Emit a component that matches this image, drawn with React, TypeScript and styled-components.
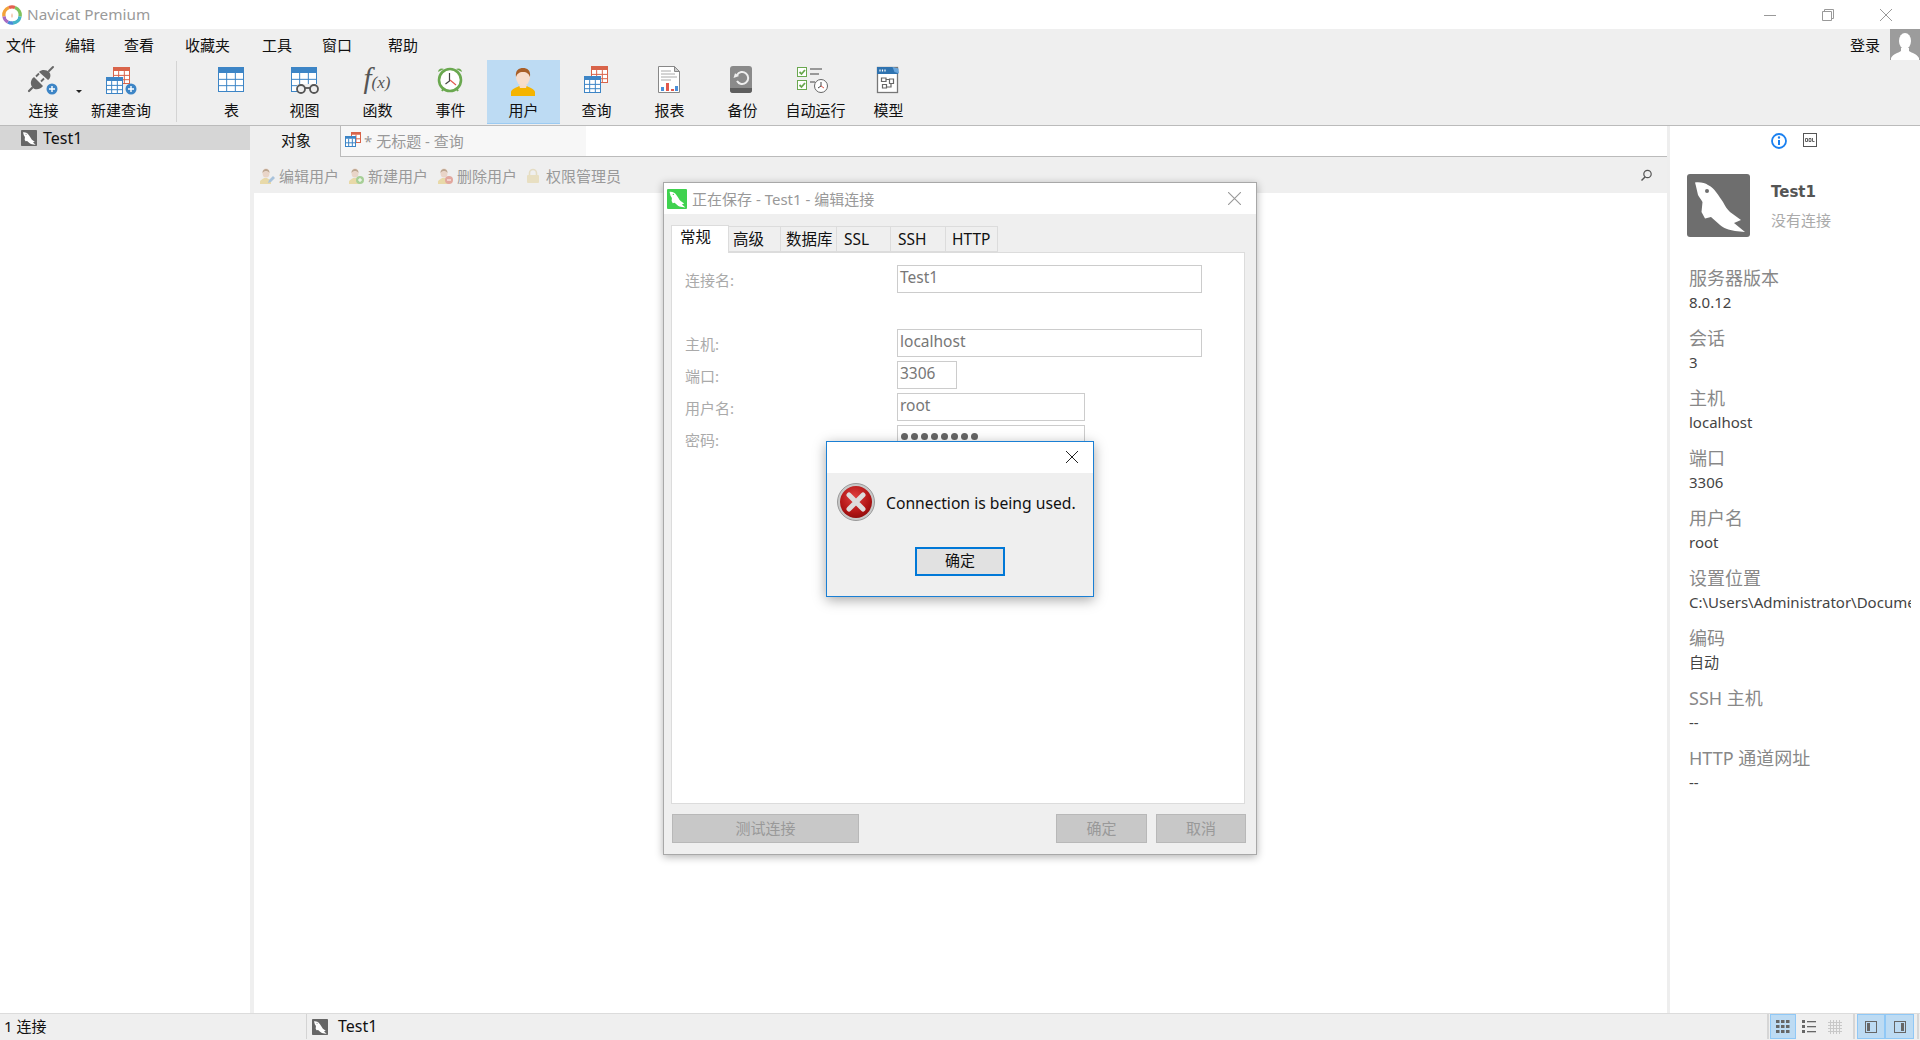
import React from "react"
import styled, {createGlobalStyle} from "styled-components"

const GlobalStyle = createGlobalStyle`
  html, body {
    margin: 0;
    width: 1920px;
    height: 1040px;
    overflow: hidden;
    background: #fff;
    font-family: "Noto Sans", "Noto Sans CJK SC", sans-serif;
    font-size: 15px;
    color: #111;
  }
  * { box-sizing: border-box; }
  svg { display: block; }
`

const Page = styled.div`
  position: relative;
  width: 1920px;
  height: 1040px;
  display: flex;
  flex-direction: column;
  overflow: hidden;
`

const TitleBar = styled.div`
  height: 29px;
  flex: none;
  display: flex;
  align-items: center;
  padding-left: 2px;
  background: #fff;
`

const AppName = styled.span`
  margin-left: 5px;
  margin-top: -2px;
  font-size: 15.3px;
  line-height: 20px;
  color: #9a9a9a;
`

const WinControls = styled.div`
  margin-left: auto;
  display: flex;
  padding-right: 28px;
  gap: 46px;
`

const MenuBar = styled.div`
  height: 31px;
  flex: none;
  display: flex;
  align-items: center;
  background: #efefef;
  padding-left: 6px;
`

const MenuItem = styled.span<{$gap: number}>`
  margin-right: ${(p) => p.$gap}px;
  font-size: 15px;
  line-height: 20px;
`

const Login = styled.span`
  margin-left: auto;
  margin-right: 10px;
  font-size: 15px;
  line-height: 20px;
`

const Avatar = styled.div`
  width: 30px;
  height: 31px;
  background: #9c9c9c;
`

const Toolbar = styled.div`
  height: 66px;
  flex: none;
  display: flex;
  background: #efefef;
  padding-left: 7px;
  border-bottom: 1px solid #bbb;
`

const ToolButton = styled.div<{$active?: boolean; $width?: number; $left?: number}>`
  position: relative;
  width: ${(p) => p.$width ?? 73}px;
  height: 64px;
  margin-left: ${(p) => p.$left ?? 0}px;
  padding-top: 4px;
  display: flex;
  flex-direction: column;
  align-items: center;
  background: ${(p) => (p.$active ? "#bddbf3" : "transparent")};
  border-bottom: 1px solid ${(p) => (p.$active ? "#9ccbf2" : "transparent")};
`

const ToolIcon = styled.div`
  width: 32px;
  height: 32px;
  margin-left: -1px;
`

const ToolLabel = styled.span`
  margin-top: 4px;
  font-size: 15px;
  line-height: 20px;
  white-space: nowrap;
`

const Caret = styled.i`
  position: absolute;
  right: -2px;
  top: 30px;
  border-left: 3px solid transparent;
  border-right: 3px solid transparent;
  border-top: 3px solid #222;
`

const ToolSep = styled.div`
  width: 1px;
  height: 61px;
  margin: 1px 18px 0 20px;
  background: #d4d4d4;
`

const FxText = styled.div`
  width: 32px;
  height: 32px;
  padding-top: 1px;
  text-align: center;
  font-family: "Liberation Serif", serif;
  font-style: italic;
  color: #555;
  white-space: nowrap;
  line-height: 26px;
  font-size: 17px;
  & b {
    font-weight: 400;
    font-size: 29px;
  }
`

const Body = styled.div`
  flex: 1;
  min-height: 0;
  display: flex;
`

const Sidebar = styled.div`
  width: 250px;
  flex: none;
  background: #fff;
`

const TreeRow = styled.div`
  height: 24px;
  display: flex;
  align-items: center;
  gap: 6px;
  padding-left: 21px;
  background: #d6d6d6;
  font-size: 16px;
`

const Main = styled.div`
  flex: 1;
  min-width: 0;
  display: flex;
  flex-direction: column;
`

const TabRow = styled.div`
  height: 31px;
  flex: none;
  display: flex;
  border-bottom: 1px solid #bbb;
  background: #fff;
`

const ObjectTab = styled.div`
  width: 90px;
  height: 31px;
  padding-left: 2px;
  background: #efefef;
  text-align: center;
  font-size: 15px;
  line-height: 29px;
`

const QueryTab = styled.div`
  width: 246px;
  display: flex;
  align-items: center;
  gap: 3px;
  padding: 0 0 2px 4px;
  background: #f7f7f7;
  border-left: 1px solid #bbb;
  color: #999;
  font-size: 15px;
`

const ObjectBar = styled.div`
  height: 36px;
  flex: none;
  display: flex;
  align-items: center;
  padding-left: 9px;
  background: #efefef;
`

const ObjectAction = styled.div<{$gap?: number}>`
  display: flex;
  align-items: center;
  gap: ${(p) => p.$gap ?? 4}px;
  margin-right: 9px;
  padding-top: 1px;
  color: #999;
  font-size: 15px;
`

const SearchSlot = styled.div`
  margin-left: auto;
  margin-right: 14px;
`

const ContentRow = styled.div`
  flex: 1;
  min-height: 0;
  border-left: 4px solid #efefef;
  background: #fff;
`

const Inspector = styled.div`
  width: 253px;
  flex: none;
  border-left: 3px solid #eee;
  background: #fff;
  overflow: hidden;
`

const InspectorTabs = styled.div`
  height: 29px;
  padding: 7px 0 0 101px;
  display: flex;
  gap: 16px;
`

const InspectorHead = styled.div`
  display: flex;
  margin: 19px 0 0 17px;
  gap: 21px;
`

const HeadName = styled.div`
  margin-top: 7px;
  font-family: "DejaVu Sans", sans-serif;
  font-weight: 700;
  font-size: 15px;
  line-height: 22px;
  color: #555;
`

const HeadSub = styled.div`
  margin-top: 6px;
  font-size: 15px;
  line-height: 22px;
  color: #aaa;
`

const InfoList = styled.div`
  margin: 28px 0 0 19px;
  width: 222px;
`

const InfoGroup = styled.div`
  margin-bottom: 12px;
  white-space: nowrap;
  overflow: hidden;
`

const InfoLabel = styled.div`
  font-size: 18px;
  line-height: 26px;
  color: #888;
`

const InfoValue = styled.div`
  font-size: 15px;
  line-height: 22px;
  color: #444;
`

const StatusBar = styled.div`
  height: 27px;
  flex: none;
  display: flex;
  background: #efefef;
  border-top: 1px solid #dcdcdc;
  font-size: 15px;
  line-height: 25px;
`

const StatusCount = styled.div`
  width: 306px;
  padding-left: 4px;
`

const StatusConn = styled.div`
  display: flex;
  align-items: center;
  gap: 10px;
  padding-left: 5px;
  height: 25px;
  border-left: 1px solid #d4d4d4;
  font-size: 16px;
`

const StatusTools = styled.div`
  margin-left: auto;
  display: flex;
  height: 25px;
`

const StatusSep = styled.div<{$left: number; $right: number}>`
  width: 2px;
  height: 25px;
  margin: 0 ${(p) => p.$right}px 0 ${(p) => p.$left}px;
  background: #d6d6d6;
`

const StatusBtn = styled.div<{$active?: boolean; $width: number}>`
  width: ${(p) => p.$width}px;
  height: 25px;
  display: flex;
  align-items: center;
  justify-content: center;
  background: ${(p) => (p.$active ? "#bddbf3" : "transparent")};
  border: 1px solid ${(p) => (p.$active ? "#90c8f6" : "transparent")};
`

const Dialog = styled.div`
  position: absolute;
  left: 663px;
  top: 182px;
  width: 594px;
  height: 673px;
  display: flex;
  flex-direction: column;
  background: #efefef;
  border: 1px solid #a8a8a8;
  box-shadow: 0 2px 8px rgba(0, 0, 0, 0.3);
`

const DialogTitle = styled.div`
  height: 31px;
  flex: none;
  display: flex;
  align-items: center;
  gap: 5px;
  padding: 0 15px 0 3px;
  background: #fff;
  color: #999;
  font-size: 15px;
  line-height: 18px;
`

const CloseSlot = styled.div`
  margin-left: auto;
`

const DialogTabs = styled.div`
  height: 28px;
  margin: 10px 0 0 7px;
  flex: none;
  display: flex;
  align-items: flex-end;
`

const DialogTab = styled.div<{$active?: boolean; $width: number; $pad: number}>`
  position: relative;
  z-index: ${(p) => (p.$active ? 1 : 0)};
  width: ${(p) => p.$width}px;
  height: ${(p) => (p.$active ? 28 : 26)}px;
  margin-bottom: ${(p) => (p.$active ? -1 : 0)}px;
  padding-left: ${(p) => p.$pad}px;
  background: ${(p) => (p.$active ? "#fff" : "#efefef")};
  border: 1px solid #dcdcdc;
  border-bottom: ${(p) => (p.$active ? "none" : "1px solid #dcdcdc")};
  border-left: ${(p) => (p.$active ? "1px solid #dcdcdc" : "none")};
  font-size: 15.5px;
  line-height: ${(p) => (p.$active ? 22 : 24)}px;
  white-space: nowrap;
`

const DialogPanel = styled.div`
  height: 552px;
  margin: 0 11px 0 7px;
  flex: none;
  padding-top: 12px;
  background: #fff;
  border: 1px solid #dcdcdc;
`

const FormRow = styled.div<{$gap?: number}>`
  height: 28px;
  margin-bottom: ${(p) => p.$gap ?? 4}px;
  padding-left: 13px;
  display: flex;
  align-items: center;
`

const FormLabel = styled.label`
  width: 212px;
  color: #aaa;
  font-size: 15px;
  line-height: 20px;
  padding-top: 2px;
`

const FormField = styled.div<{$width: number}>`
  width: ${(p) => p.$width}px;
  height: 28px;
  padding-left: 2px;
  background: #fff;
  border: 1px solid #ccc;
  color: #777;
  font-size: 15.5px;
  line-height: 23px;
  white-space: nowrap;
`

const Dots = styled.div`
  display: flex;
  gap: 3px;
  padding: 7px 0 0 1px;
  & i {
    width: 7px;
    height: 7px;
    border-radius: 50%;
    background: #666;
  }
`

const DialogFooter = styled.div`
  margin: 10px 10px 0 8px;
  display: flex;
  gap: 9px;
`

const GreyButton = styled.div<{$width: number; $push?: boolean}>`
  width: ${(p) => p.$width}px;
  height: 29px;
  margin-left: ${(p) => (p.$push ? "auto" : "0")};
  background: #c8c8c8;
  border: 1px solid #b8b8b8;
  color: #999;
  text-align: center;
  font-size: 15px;
  line-height: 26px;
`

const Alert = styled.div`
  position: absolute;
  left: 826px;
  top: 441px;
  width: 268px;
  height: 156px;
  display: flex;
  flex-direction: column;
  background: #efefef;
  border: 1px solid #1a7fd4;
  box-shadow: 0 3px 12px rgba(0, 0, 0, 0.35);
`

const AlertTitle = styled.div`
  height: 31px;
  flex: none;
  display: flex;
  justify-content: flex-end;
  align-items: center;
  padding: 0 15px 2px 0;
  background: #fff;
`

const AlertBody = styled.div`
  display: flex;
  align-items: center;
  gap: 11px;
  margin: 9px 0 0 10px;
  height: 40px;
`

const AlertText = styled.span`
  padding-top: 2px;
  font-size: 15.7px;
  line-height: 20px;
  white-space: nowrap;
  color: #111;
`

const AlertButton = styled.div`
  width: 90px;
  height: 29px;
  margin: 25px 0 0 88px;
  background: #e1e1e1;
  border: 2px solid #0078d7;
  text-align: center;
  font-size: 15px;
  line-height: 23px;
`

/* ---- drawings ---- */

const Grid = ({x, y, w, h, c, cols = 3, rows = 3}: {x: number; y: number; w: number; h: number; c: string; cols?: number; rows?: number}) => {
  const head = h * 0.24
  const lines = []
  for (let i = 1; i < cols; i++) {
    const lx = x + (w * i) / cols
    lines.push(<line key={"c" + i} x1={lx} x2={lx} y1={y + head} y2={y + h} stroke={c} strokeWidth="1" />)
  }
  for (let i = 1; i < rows; i++) {
    const ly = y + head + ((h - head) * i) / rows
    lines.push(<line key={"r" + i} x1={x} x2={x + w} y1={ly} y2={ly} stroke={c} strokeWidth="1" />)
  }
  return (
    <g>
      <rect x={x + 0.5} y={y + 0.5} width={w - 1} height={h - 1} fill="#fff" stroke={c} />
      <path d={`M${x} ${y + 2}a2 2 0 0 1 2-2h${w - 4}a2 2 0 0 1 2 2v${head - 2}h-${w}z`} fill={c} />
      {lines}
    </g>
  )
}

const PlusBadge = ({cx, cy}: {cx: number; cy: number}) => (
  <g>
    <circle cx={cx} cy={cy} r="5.5" fill="#3d85c6" />
    <path d={`M${cx - 3} ${cy}h6M${cx} ${cy - 3}v6`} stroke="#fff" strokeWidth="1.4" />
  </g>
)

const Svg32 = ({children}: {children: React.ReactNode}) => (
  <svg width="32" height="32" viewBox="0 0 32 32" overflow="visible">
    {children}
  </svg>
)

const ConnectIcon = () => (
  <Svg32>
    <g transform="translate(1 0)">
      <path d="M11 8L20 16C23 14 23 10 21 8C19 6 14 5 11 8Z" fill="#666" />
      <path d="M21 7L25 3" stroke="#666" strokeWidth="2" strokeLinecap="round" />
      <path d="M6 13L15 22C12 26 7 26 5 24C2 21 2 16 6 13Z" fill="#666" />
      <path d="M8 12.500L11 9.500M13 17.500L16 14.500" stroke="#666" strokeWidth="1.800" />
      <path d="M4 24L1 27" stroke="#666" strokeWidth="2.200" strokeLinecap="round" />
    </g>
    <PlusBadge cx={25} cy={25} />
  </Svg32>
)

const NewQueryIcon = () => (
  <Svg32>
    <Grid x={8} y={3} w={17} h={17} c="#d9644a" />
    <Grid x={1} y={13} w={17} h={17} c="#3d85c6" />
    <PlusBadge cx={26} cy={25} />
  </Svg32>
)

const TableIcon = () => (
  <Svg32>
    <Grid x={3} y={3} w={26} h={25} c="#3d85c6" />
  </Svg32>
)

const ViewIcon = () => (
  <Svg32>
    <Grid x={3} y={3} w={26} h={25} c="#3d85c6" />
    <rect x="9" y="20" width="23" height="10" fill="#efefef" />
    <circle cx="13" cy="25" r="4" fill="#efefef" stroke="#555" strokeWidth="1.8" />
    <circle cx="26" cy="25" r="4" fill="#efefef" stroke="#555" strokeWidth="1.8" />
    <path d="M17 24h5" stroke="#555" strokeWidth="1.8" />
  </Svg32>
)

const ClockIcon = () => (
  <Svg32>
    <path d="M4 8a4 4 0 0 1 6-3zM28 8a4 4 0 0 0-6-3z" fill="#6aa84f" />
    <circle cx="16" cy="16" r="11" fill="#fff" stroke="#6aa84f" strokeWidth="2.6" />
    <path d="M8 27l2-3M24 27l-2-3" stroke="#6aa84f" strokeWidth="2" />
    <path d="M15.5 9v8l-4 3" stroke="#444" strokeWidth="1.2" fill="none" />
    <path d="M16 16l6 5" stroke="#e2574c" strokeWidth="1.1" />
  </Svg32>
)

const UserIcon = () => (
  <Svg32>
    <path d="M4 32v-4c0-3 7-5 8-6h8c1 1 8 3 8 6v4z" fill="#f5b400" />
    <path d="M12 21h8l-1 3h-6z" fill="#f6dcc8" />
    <ellipse cx="16" cy="13" rx="7" ry="9" fill="#f7ddcb" />
    <path d="M9 13c-1-7 3-9 7-9s8 2 7 9c-1-3-3-5-7-5s-6 2-7 5z" fill="#a85f28" />
  </Svg32>
)

const QueryIcon = () => (
  <Svg32>
    <Grid x={11} y={2} w={17} h={17} c="#d9644a" />
    <Grid x={4} y={12} w={17} h={17} c="#3d85c6" />
  </Svg32>
)

const ReportIcon = () => (
  <Svg32>
    <path d="M5.5 2.5h16l5 5v21h-21z" fill="#fff" stroke="#888" />
    <path d="M21.5 2.5v5h5z" fill="#ccc" stroke="#888" />
    <path d="M8 7h10M8 10h14M8 13h16M8 16h10" stroke="#aaa" strokeWidth="1" />
    <rect x="8" y="23" width="3" height="4" fill="#4a90d9" />
    <rect x="13" y="19" width="3" height="8" fill="#e2574c" />
    <rect x="18" y="25" width="3" height="2" fill="#e2574c" />
    <rect x="22" y="22" width="3" height="5" fill="#4a90d9" />
  </Svg32>
)

const BackupIcon = () => (
  <Svg32>
    <rect x="4" y="2" width="22" height="27" rx="3" fill="#8a8a8a" />
    <path d="M4 24h22v2a3 3 0 0 1-3 3H7a3 3 0 0 1-3-3z" fill="#5e5e5e" />
    <path d="M11 11a6 6 0 1 1 0 6" fill="none" stroke="#eee" strokeWidth="2" />
    <path d="M7 13h6l-3-4z" fill="#eee" transform="rotate(-20 10 12)" />
  </Svg32>
)

const AutoRunIcon = () => (
  <Svg32>
    <g transform="translate(-7 0)">
      <rect x="5.5" y="3.5" width="9" height="9" fill="#fff" stroke="#6aa84f" />
      <path d="M7.5 8l2 2 3.5-4" fill="none" stroke="#6aa84f" strokeWidth="1.8" />
      <rect x="5.5" y="16.5" width="9" height="9" fill="#fff" stroke="#6aa84f" />
      <path d="M7.5 21l2 2 3.5-4" fill="none" stroke="#6aa84f" strokeWidth="1.8" />
      <path d="M18 5h12M18 10h9M18 18h5" stroke="#999" strokeWidth="2" />
      <circle cx="29" cy="22" r="6.5" fill="#fff" stroke="#666" />
      <path d="M29 18v4l-3 2" fill="none" stroke="#444" />
      <path d="M29 22l3 2" stroke="#e2574c" />
    </g>
  </Svg32>
)

const ModelIcon = () => (
  <Svg32>
    <rect x="5.5" y="3.5" width="20" height="25" fill="#fff" stroke="#777" strokeWidth="1.300" />
    <path d="M5 3h16l5 4v3H5z" fill="#2f73b0" />
    <path d="M20.500 3l6 1.500 .5 5-4.500-1.500z" fill="#6aa6dc" />
    <path d="M8 5.500v2M10.500 5.500v2M13 5.500v2" stroke="#fff" strokeWidth="1.200" />
    <path d="M9.500 14h4.500v3.500h-4.500zM17.500 15h4v4.500h-4zM10.500 20.500h4v3.500h-4zM14 15.500h3.500M14.500 23h4.500v-3.500" fill="none" stroke="#666" strokeWidth="1.200" />
  </Svg32>
)

const Dolphin = ({size, bg, fg = "#fff"}: {size: number; bg: string; fg?: string}) => (
  <svg width={size} height={size} viewBox="0 0 63 63">
    <rect width="63" height="63" rx="3" fill={bg} />
    <path
      d="M8 8.500C14 8 18 9 21 11C25 13 27 15 29 18C32 22 34 25 36 28C38 32 40 35 43 38L54 46L47 49L58 58L48 57C42 56 36 54 33 51L24 43L18 44.500L14.500 38L15.500 28C14 25 12 23 11 21C10 17 9 12 8 8.500Z"
      fill={fg}
    />
    <circle cx="20" cy="17" r="2" fill={bg} />
  </svg>
)

const NavicatLogo = () => (
  <svg width="20" height="20" viewBox="0 0 20 20">
    <path d="M2 11.500A8 8 0 0 1 7 2.500" fill="none" stroke="#f2a23a" strokeWidth="3.400" />
    <path d="M7 2.500A8 8 0 0 1 13 2.500" fill="none" stroke="#e4604f" strokeWidth="3.400" />
    <path d="M13 2.500A8 8 0 0 1 18 11.500" fill="none" stroke="#7fc25c" strokeWidth="3.400" />
    <path d="M18 11.500A8 8 0 0 1 11 18" fill="none" stroke="#46b5c8" strokeWidth="3.400" />
    <path d="M11 18A8 8 0 0 1 6 17" fill="none" stroke="#4a88d8" strokeWidth="3.400" />
    <path d="M6 17A8 8 0 0 1 2 11.500" fill="none" stroke="#a66cc4" strokeWidth="3.400" />
    <path d="M4 13c0-4 2-6 4-6 1 0 1.500.5 2 1 .5-.5 1-1 2-1 2 0 4 2 4 6-1 2-3 3-6 3s-5-1-6-3z" fill="#fff" />
    <path d="M10 8c-1 2-1 4 0 5 1-1 1-3 0-5z" fill="#f0b89a" />
  </svg>
)

const CloseX = ({size, color}: {size: number; color: string}) => (
  <svg width={size} height={size} viewBox="0 0 12 12">
    <path d="M0 0L12 12M12 0L0 12" stroke={color} strokeWidth="1" />
  </svg>
)

const MinIcon = () => (
  <svg width="12" height="12" viewBox="0 0 12 12">
    <path d="M0 6.5h12" stroke="#999" />
  </svg>
)

const RestoreIcon = () => (
  <svg width="12" height="12" viewBox="0 0 12 12">
    <path d="M.5 2.5h9v9h-9zM2.5 2.5v-2h9v9h-2" fill="none" stroke="#999" />
  </svg>
)

const Silhouette = () => (
  <svg width="30" height="31" viewBox="0 0 30 31">
    <ellipse cx="15" cy="12" rx="6" ry="8" fill="#fff" />
    <path d="M11 19h8v3c3 2 8 3 10 7v2H1v-2c2-4 7-5 10-7z" fill="#fff" />
  </svg>
)

const ActionIcon = ({badge}: {badge: "edit" | "add" | "del"}) => (
  <svg width="16" height="16" viewBox="0 0 16 16">
    <path d="M1 16v-2c0-2 3-3 4-4h3c1 1 3 1.500 4 3v3z" fill="#e8d9a8" />
    <ellipse cx="7" cy="5" rx="3.500" ry="4.500" fill="#e9d5c8" />
    <path d="M3.500 5c0-3 2-4 3.500-4s3.500 1 3.500 4c-1-1.500-2-2-3.500-2s-2.500.5-3.500 2z" fill="#bba58f" />
    {badge === "edit" && <path d="M9 15l1-3 4-4 2 2-4 4z" fill="#a9c3dc" />}
    {badge === "add" && (
      <g>
        <circle cx="12" cy="12" r="4" fill="#a7cf97" />
        <path d="M10 12h4M12 10v4" stroke="#fff" />
      </g>
    )}
    {badge === "del" && (
      <g>
        <circle cx="12" cy="12" r="4" fill="#e2a79e" />
        <path d="M10 12h4" stroke="#fff" />
      </g>
    )}
  </svg>
)

const LockIcon = () => (
  <svg width="14" height="16" viewBox="0 0 14 16">
    <path d="M3.500 7V5a3.500 3.500 0 0 1 7 0v2" fill="none" stroke="#e4dcc4" strokeWidth="1.600" />
    <rect x="1" y="7" width="12" height="8" rx="1" fill="#e8dfc2" />
  </svg>
)

const SearchIcon = () => (
  <svg width="13" height="13" viewBox="0 0 13 13">
    <circle cx="7.500" cy="5" r="3.700" fill="none" stroke="#555" strokeWidth="1.200" />
    <path d="M5 8l-3.500 3.500" stroke="#555" strokeWidth="1.400" />
  </svg>
)

const QueryTabIcon = () => (
  <svg width="16" height="16" viewBox="0 0 16 16">
    <Grid x={6} y={0} w={10} h={11} c="#d9644a" cols={2} rows={2} />
    <Grid x={0} y={4} w={11} h={11} c="#3d85c6" cols={3} rows={2} />
  </svg>
)

const InfoIcon = () => (
  <svg width="16" height="16" viewBox="0 0 16 16">
    <circle cx="8" cy="8" r="7" fill="#fff" stroke="#1a80f0" strokeWidth="1.800" />
    <path d="M8 7v5" stroke="#1a80f0" strokeWidth="2" />
    <circle cx="8" cy="4.500" r="1.200" fill="#1a80f0" />
  </svg>
)

const DdlIcon = () => (
  <svg width="14" height="14" viewBox="0 0 14 14">
    <rect x=".5" y=".5" width="13" height="13" fill="#fff" stroke="#555" />
    <path d="M2.500 5.500h2v3h-2zM6 5.500h2v3h-2zM9.500 5v3.500h2" fill="none" stroke="#555" strokeWidth=".9" />
  </svg>
)

const GridViewIcon = () => (
  <svg width="14" height="14" viewBox="0 0 14 14">
    {[0, 5, 10].map((y) =>
      [0, 5, 10].map((x) => <rect key={x + "-" + y} x={x} y={y} width="3.500" height="3" fill="#666" />)
    )}
  </svg>
)

const ListViewIcon = () => (
  <svg width="14" height="14" viewBox="0 0 14 14">
    {[1, 6, 11].map((y) => (
      <g key={y}>
        <rect x="0" y={y - 1} width="3" height="3" fill="#666" />
        <rect x="5" y={y} width="9" height="1.300" fill="#666" />
      </g>
    ))}
  </svg>
)

const DetailViewIcon = () => (
  <svg width="14" height="14" viewBox="0 0 14 14">
    <path d="M0 2.500h14M0 5.500h14M0 8.500h14M0 11.500h14M2.500 0v14M5.500 0v14M8.500 0v14M11.500 0v14" stroke="#c8c8c8" />
  </svg>
)

const PaneIcon = ({side}: {side: "left" | "right"}) => (
  <svg width="12" height="12" viewBox="0 0 12 12">
    <rect x=".5" y=".5" width="11" height="11" fill="none" stroke="#666" />
    <rect x={side === "left" ? 2 : 7} y="2" width="3" height="8" fill="#666" />
  </svg>
)

const AlertIcon = () => (
  <svg width="38" height="38" viewBox="0 0 38 38">
    <defs>
      <radialGradient id="errFill" cx="45%" cy="35%" r="70%">
        <stop offset="0%" stopColor="#e04040" />
        <stop offset="70%" stopColor="#b01414" />
        <stop offset="100%" stopColor="#8a0c0c" />
      </radialGradient>
    </defs>
    <circle cx="19" cy="19" r="18.500" fill="#c9c9c9" stroke="#888" strokeWidth=".8" />
    <circle cx="19" cy="19" r="16" fill="url(#errFill)" />
    <path d="M12 12L26 26M26 12L12 26" stroke="#ddd" strokeWidth="5" strokeLinecap="round" />
  </svg>
)

const tools: [string, React.ReactNode, boolean?][] = [
  ["表", <TableIcon key="t" />],
  ["视图", <ViewIcon key="v" />],
  ["函数", <FxText key="f"><b>f</b>(x)</FxText>],
  ["事件", <ClockIcon key="e" />],
  ["用户", <UserIcon key="u" />, true],
  ["查询", <QueryIcon key="q" />],
  ["报表", <ReportIcon key="r" />],
  ["备份", <BackupIcon key="b" />],
  ["自动运行", <AutoRunIcon key="a" />],
  ["模型", <ModelIcon key="m" />]
]

const menus: [string, number][] = [
  ["文件", 29],
  ["编辑", 29],
  ["查看", 31],
  ["收藏夹", 32],
  ["工具", 30],
  ["窗口", 36],
  ["帮助", 0]
]

const info: [string, string][] = [
  ["服务器版本", "8.0.12"],
  ["会话", "3"],
  ["主机", "localhost"],
  ["端口", "3306"],
  ["用户名", "root"],
  ["设置位置", "C:\\Users\\Administrator\\Documents\\Navicat"],
  ["编码", "自动"],
  ["SSH 主机", "--"],
  ["HTTP 通道网址", "--"]
]

const dialogTabs: [string, number, number][] = [
  ["常规", 58, 8],
  ["高级", 52, 4],
  ["数据库", 56, 5],
  ["SSL", 54, 7],
  ["SSH", 55, 7],
  ["HTTP", 52, 6]
]

export default function App() {
  return (
    <Page>
      <GlobalStyle />
      <TitleBar>
        <NavicatLogo />
        <AppName>Navicat Premium</AppName>
        <WinControls>
          <MinIcon />
          <RestoreIcon />
          <CloseX size={12} color="#999" />
        </WinControls>
      </TitleBar>
      <MenuBar>
        {menus.map(([name, gap]) => (
          <MenuItem key={name} $gap={gap}>
            {name}
          </MenuItem>
        ))}
        <Login>登录</Login>
        <Avatar>
          <Silhouette />
        </Avatar>
      </MenuBar>
      <Toolbar>
        <ToolButton>
          <ToolIcon>
            <ConnectIcon />
          </ToolIcon>
          <ToolLabel>连接</ToolLabel>
          <Caret />
        </ToolButton>
        <ToolButton $width={70} $left={6}>
          <ToolIcon>
            <NewQueryIcon />
          </ToolIcon>
          <ToolLabel>新建查询</ToolLabel>
        </ToolButton>
        <ToolSep />
        {tools.map(([name, icon, active]) => (
          <ToolButton key={name} $active={active}>
            <ToolIcon>{icon}</ToolIcon>
            <ToolLabel>{name}</ToolLabel>
          </ToolButton>
        ))}
      </Toolbar>
      <Body>
        <Sidebar>
          <TreeRow>
            <Dolphin size={16} bg="#666" />
            Test1
          </TreeRow>
        </Sidebar>
        <Main>
          <TabRow>
            <ObjectTab>对象</ObjectTab>
            <QueryTab>
              <QueryTabIcon />* 无标题 - 查询
            </QueryTab>
          </TabRow>
          <ObjectBar>
            <ObjectAction>
              <ActionIcon badge="edit" />
              编辑用户
            </ObjectAction>
            <ObjectAction>
              <ActionIcon badge="add" />
              新建用户
            </ObjectAction>
            <ObjectAction>
              <ActionIcon badge="del" />
              删除用户
            </ObjectAction>
            <ObjectAction $gap={6}>
              <LockIcon />
              权限管理员
            </ObjectAction>
            <SearchSlot>
              <SearchIcon />
            </SearchSlot>
          </ObjectBar>
          <ContentRow />
        </Main>
        <Inspector>
          <InspectorTabs>
            <InfoIcon />
            <DdlIcon />
          </InspectorTabs>
          <InspectorHead>
            <Dolphin size={63} bg="#6e6e6e" />
            <div>
              <HeadName>Test1</HeadName>
              <HeadSub>没有连接</HeadSub>
            </div>
          </InspectorHead>
          <InfoList>
            {info.map(([label, value]) => (
              <InfoGroup key={label}>
                <InfoLabel>{label}</InfoLabel>
                <InfoValue>{value}</InfoValue>
              </InfoGroup>
            ))}
          </InfoList>
        </Inspector>
      </Body>
      <StatusBar>
        <StatusCount>1 连接</StatusCount>
        <StatusConn>
          <Dolphin size={16} bg="#666" />
          Test1
        </StatusConn>
        <StatusTools>
          <StatusSep $left={0} $right={1} />
          <StatusBtn $active $width={26}>
            <GridViewIcon />
          </StatusBtn>
          <StatusBtn $width={26}>
            <ListViewIcon />
          </StatusBtn>
          <StatusBtn $width={26}>
            <DetailViewIcon />
          </StatusBtn>
          <StatusSep $left={5} $right={2} />
          <StatusBtn $active $width={28}>
            <PaneIcon side="left" />
          </StatusBtn>
          <StatusBtn $active $width={29}>
            <PaneIcon side="right" />
          </StatusBtn>
          <StatusSep $left={3} $right={1} />
        </StatusTools>
      </StatusBar>

      <Dialog>
        <DialogTitle>
          <Dolphin size={20} bg="#3fd24f" />
          正在保存 - Test1 - 编辑连接
          <CloseSlot>
            <CloseX size={13} color="#999" />
          </CloseSlot>
        </DialogTitle>
        <DialogTabs>
          {dialogTabs.map(([name, width, pad], i) => (
            <DialogTab key={name} $active={i === 0} $width={width} $pad={pad}>
              {name}
            </DialogTab>
          ))}
        </DialogTabs>
        <DialogPanel>
          <FormRow $gap={36}>
            <FormLabel>连接名:</FormLabel>
            <FormField $width={305}>Test1</FormField>
          </FormRow>
          <FormRow>
            <FormLabel>主机:</FormLabel>
            <FormField $width={305}>localhost</FormField>
          </FormRow>
          <FormRow>
            <FormLabel>端口:</FormLabel>
            <FormField $width={60}>3306</FormField>
          </FormRow>
          <FormRow>
            <FormLabel>用户名:</FormLabel>
            <FormField $width={188}>root</FormField>
          </FormRow>
          <FormRow>
            <FormLabel>密码:</FormLabel>
            <FormField $width={188}>
              <Dots>
                {Array.from({length: 8}).map((_, i) => (
                  <i key={i} />
                ))}
              </Dots>
            </FormField>
          </FormRow>
        </DialogPanel>
        <DialogFooter>
          <GreyButton $width={187}>测试连接</GreyButton>
          <GreyButton $width={91} $push>
            确定
          </GreyButton>
          <GreyButton $width={90}>取消</GreyButton>
        </DialogFooter>
      </Dialog>

      <Alert>
        <AlertTitle>
          <CloseX size={12} color="#222" />
        </AlertTitle>
        <AlertBody>
          <AlertIcon />
          <AlertText>Connection is being used.</AlertText>
        </AlertBody>
        <AlertButton>确定</AlertButton>
      </Alert>
    </Page>
  )
}
